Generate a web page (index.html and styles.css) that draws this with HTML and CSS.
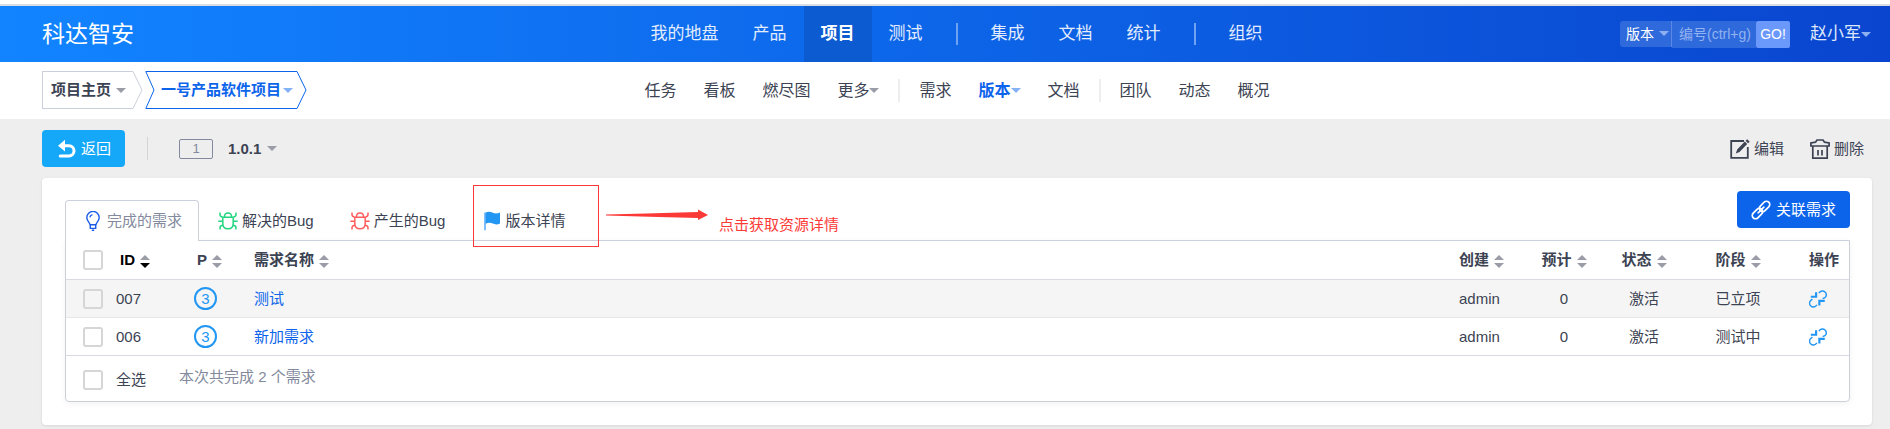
FILE: index.html
```html
<!DOCTYPE html>
<html lang="zh-CN">
<head>
<meta charset="utf-8">
<title>科达智安 - 版本 1.0.1</title>
<link rel="stylesheet" href="styles.css">
</head>
<body>
<svg class="symbols" aria-hidden="true">
  <symbol id="i-bulb" viewBox="0 0 20 20"><path d="M7 13.8C7 11.6 3.8 10.200 3.800 6.600a6.200 6.200 0 0 1 12.400 0C16.200 10.200 13 11.600 13 13.800ZM7.300 14v3.400h5.400V14M8.800 19.200h2.400M6.900 6.400A3.200 3.200 0 0 1 9.400 3.600" fill="none" stroke="currentColor" stroke-width="1.400"/></symbol>
  <symbol id="i-bug" viewBox="0 0 20 20"><path d="M3.800 6.200h12.400M4.800 6.200v6.300c0 3.400 2 5.300 5.200 5.300s5.200-1.900 5.200-5.300V6.200M6.400 6C6.400 3.200 7.600 2 10 2s3.600 1.200 3.600 4M4.800 6.200C2.900 6 2 5 2 3.600V1.500M15.200 6.200C17.100 6 18 5 18 3.600V1.500M4.800 10.300H.3M15.200 10.300h4.500M5 14.200c-1.900.2-3 1.200-3 2.600v1.700M15 14.200c1.900.2 3 1.200 3 2.600v1.700" fill="none" stroke="currentColor" stroke-width="1.500"/></symbol>
  <symbol id="i-flag" viewBox="0 0 20 20"><path d="M4 1.500v17.800" stroke="#7fc0fa" stroke-width="2"/><path d="M4.600 1.800c2.600-1.600 5-1 7.200 0s4.400 1 7.200-.2v11c-2.800 1.200-5 1-7.200 0s-4.600-1.200-7.200.2Z" fill="currentColor"/></symbol>
  <symbol id="i-back" viewBox="0 0 20 20"><path d="M5.500 6.800H12a5 5 0 0 1 0 10.100H3.200" fill="none" stroke="currentColor" stroke-width="3" stroke-linecap="round"/><path d="M8 .8v11.600L1 6.700Z" fill="currentColor"/></symbol>
  <symbol id="i-edit" viewBox="0 0 20 20"><path d="M14 2H1.200v16.800H17.800V8" fill="none" stroke="currentColor" stroke-width="1.800"/><path d="m5.800 14.600 1.400-4.200 7.600-7.800 2.400 2.400-7.700 7.900ZM15.600 1.800 17.200.3l2.500 2.400L18 4.300Z" fill="currentColor"/></symbol>
  <symbol id="i-trash" viewBox="0 0 20 20"><path d="M.9 7V4l4.600-.8L7 1h6l1.500 2.200 4.600.8v3ZM2.800 7v12.200h14.400V7M8 11v5.500M12 11v5.500" fill="none" stroke="currentColor" stroke-width="1.700"/></symbol>
  <symbol id="i-link" viewBox="0 0 20 20"><g fill="none" stroke="currentColor" stroke-width="1.700" stroke-linecap="round" transform="rotate(-45 10 10)"><rect x="-1" y="6.700" width="12" height="6.600" rx="3.300"/><rect x="9" y="6.700" width="12" height="6.600" rx="3.300"/><path d="M6 10h8"/></g></symbol>
  <symbol id="i-unlink" viewBox="0 0 20 20"><path d="M11 3.400C12.800.8 15.800.4 17.800 2.200s1.900 4.800-.2 6.400l-2.400 1M8.800 16.600C7 19.200 4 19.600 2 17.800s-1.900-4.800.2-6.400l1.600-1.200" fill="none" stroke="currentColor" stroke-width="1.600"/><path d="M7.900 2.600v4.900H2M11.500 17.200v-5.100h6" fill="none" stroke="currentColor" stroke-width="2.400"/></symbol>
</svg>

<header class="header">
  <a class="logo" href="#">科达智安</a>
  <nav class="mainnav">
    <a href="#">我的地盘</a>
    <a href="#">产品</a>
    <a href="#" class="active">项目</a>
    <a href="#">测试</a>
    <span class="mainnav-divider"></span>
    <a href="#">集成</a>
    <a href="#">文档</a>
    <a href="#">统计</a>
    <span class="mainnav-divider"></span>
    <a href="#">组织</a>
  </nav>
  <div class="header-tools">
    <form class="search">
      <span class="search-type">
        <select aria-label="搜索类型"><option>版本</option></select>
        <span class="caret caret-light"></span>
      </span>
      <input class="search-input" type="text" placeholder="编号(ctrl+g)" aria-label="编号">
      <button class="search-go" type="button">GO!</button>
    </form>
    <button class="user" type="button">赵小军<span class="caret caret-light"></span></button>
  </div>
</header>

<div class="subheader">
  <div class="crumbs">
    <button class="crumb" type="button">
      <span class="crumb-body crumb-first">项目主页<span class="caret"></span></span>
      <svg class="crumb-end" viewBox="0 0 10 38"><path d="M0 .5 9 19 0 37.500"/></svg>
    </button>
    <button class="crumb crumb-active" type="button">
      <svg class="crumb-end" viewBox="0 0 10 38"><path d="M10 .5H.800L9 19 .800 37.500H10"/></svg>
      <span class="crumb-body">一号产品软件项目<span class="caret"></span></span>
      <svg class="crumb-end" viewBox="0 0 10 38"><path d="M0 .5 9 19 0 37.500"/></svg>
    </button>
  </div>
  <nav class="subnav">
    <a href="#">任务</a>
    <a href="#">看板</a>
    <a href="#">燃尽图</a>
    <a href="#">更多<span class="caret"></span></a>
    <span class="subnav-divider"></span>
    <a href="#">需求</a>
    <a href="#" class="active">版本<span class="caret"></span></a>
    <a href="#">文档</a>
    <span class="subnav-divider"></span>
    <a href="#">团队</a>
    <a href="#">动态</a>
    <a href="#">概况</a>
  </nav>
</div>

<main class="main">
  <div class="toolbar">
    <button class="btn btn-back" type="button"><svg class="icon"><use href="#i-back"/></svg>返回</button>
    <span class="toolbar-divider"></span>
    <span class="label-id">1</span>
    <button class="version" type="button">1.0.1<span class="caret"></span></button>
    <div class="actions">
      <a href="#"><svg class="icon"><use href="#i-edit"/></svg>编辑</a>
      <a href="#"><svg class="icon"><use href="#i-trash"/></svg>删除</a>
    </div>
  </div>

  <section class="panel">
    <div class="tabbar">
      <nav class="tabs">
        <a href="#" class="tab active"><svg class="icon blue"><use href="#i-bulb"/></svg>完成的需求</a>
        <a href="#" class="tab"><svg class="icon green"><use href="#i-bug"/></svg>解决的Bug</a>
        <a href="#" class="tab"><svg class="icon red"><use href="#i-bug"/></svg>产生的Bug</a>
        <a href="#" class="tab"><svg class="icon sky"><use href="#i-flag"/></svg>版本详情</a>
      </nav>
      <button class="btn btn-link" type="button"><svg class="icon"><use href="#i-link"/></svg>关联需求</button>
    </div>

    <div class="tablebox">
      <table class="stories">
        <colgroup>
          <col class="c-check"><col class="c-id"><col class="c-pri"><col>
          <col class="c-user"><col class="c-est"><col class="c-est"><col class="c-stage"><col class="c-act">
        </colgroup>
        <thead>
          <tr>
            <th class="check"><input type="checkbox" aria-label="选择全部需求"></th>
            <th class="id-head sorted">ID<span class="sort"></span></th>
            <th class="pri-head">P<span class="sort"></span></th>
            <th>需求名称<span class="sort"></span></th>
            <th>创建<span class="sort"></span></th>
            <th class="mid">预计<span class="sort"></span></th>
            <th class="mid">状态<span class="sort"></span></th>
            <th class="mid">阶段<span class="sort"></span></th>
            <th class="act">操作</th>
          </tr>
        </thead>
        <tbody>
          <tr>
            <td class="check"><input type="checkbox" aria-label="选择 007"></td>
            <td>007</td>
            <td><span class="pri">3</span></td>
            <td><a href="#">测试</a></td>
            <td>admin</td>
            <td class="mid">0</td>
            <td class="mid">激活</td>
            <td class="mid">已立项</td>
            <td class="act"><button type="button" aria-label="移除需求"><svg class="icon"><use href="#i-unlink"/></svg></button></td>
          </tr>
          <tr>
            <td class="check"><input type="checkbox" aria-label="选择 006"></td>
            <td>006</td>
            <td><span class="pri">3</span></td>
            <td><a href="#">新加需求</a></td>
            <td>admin</td>
            <td class="mid">0</td>
            <td class="mid">激活</td>
            <td class="mid">测试中</td>
            <td class="act"><button type="button" aria-label="移除需求"><svg class="icon"><use href="#i-unlink"/></svg></button></td>
          </tr>
        </tbody>
      </table>
      <div class="tablefoot">
        <label class="check-all"><input type="checkbox">全选</label>
        <span class="summary">本次共完成 2 个需求</span>
      </div>
    </div>

    <div class="note">
      <span class="note-box"></span>
      <svg class="note-arrow" viewBox="0 0 102 12"><path d="M0 5.500 40 4.500 92 3V.5L102 6 92 11V9L52 8 0 6.500Z"/></svg>
      <span class="note-text">点击获取资源详情</span>
    </div>
  </section>
</main>
</body>
</html>
```
FILE: styles.css
```css
* {
  box-sizing: border-box;
}

html {
  background: #eee;
}

body {
  margin: 0;
  border-top: 4px solid #fff;
  background: #eee;
  color: #3c4353;
  font: 15px/20px "Liberation Sans", "Noto Sans CJK SC", sans-serif;
}

a {
  color: inherit;
  text-decoration: none;
}

button,
input,
select {
  margin: 0;
  padding: 0;
  border: 0;
  background: none;
  color: inherit;
  font: inherit;
}

button {
  cursor: pointer;
}

.symbols {
  display: none;
}

.icon {
  flex: none;
  width: 20px;
  height: 20px;
  overflow: visible;
}

.caret {
  display: inline-block;
  flex: none;
  border: 5px solid transparent;
  border-top-color: #9a9ca7;
  border-bottom: 0;
}

.caret-light {
  border-top-color: #8fb0f0;
}

/* Header */
.header {
  display: grid;
  grid-template-columns: 1fr auto 1fr;
  align-items: center;
  height: 58px;
  padding: 0 19px 0 42px;
  border-top: 2px solid #dadde2;
  background: linear-gradient(90deg, #1284ff, #0d65e8 50%, #0a45cf);
  color: #fff;
}

.logo {
  font-size: 23px;
  line-height: 32px;
}

.mainnav {
  display: flex;
  align-items: center;
  font-size: 17px;
  line-height: 56px;
}

.mainnav a {
  padding: 0 17px;
  color: #e3edfd;
}

.mainnav a.active {
  background: #0d5bd0;
  color: #fff;
  font-weight: bold;
}

.mainnav-divider {
  width: 2px;
  height: 22px;
  margin: 0 16px;
  background: #6ea3f3;
}

.header-tools {
  display: flex;
  justify-content: flex-end;
  align-items: center;
  gap: 20px;
}

.search {
  display: flex;
  font-size: 14px;
}

.search-type {
  display: flex;
  align-items: center;
  width: 52px;
  height: 26px;
  padding-left: 6px;
  border-right: 1px solid #5c88e4;
  border-radius: 3px 0 0 3px;
  background: #2f6adc;
}

.search-type select {
  width: 33px;
  appearance: none;
  color: #fff;
}

.search-input {
  width: 84px;
  height: 27px;
  padding: 0 0 0 7px;
  background: #2f6adc;
}

.search-input::placeholder {
  color: #93b2ef;
}

.search-go {
  width: 34px;
  height: 27px;
  border-radius: 2px;
  background: #6b98fb;
  color: #fff;
}

.user {
  display: flex;
  align-items: center;
  color: #dde8fb;
  font-size: 17px;
}

/* Project bar */
.subheader {
  display: grid;
  grid-template-columns: 1fr auto 1fr;
  align-items: center;
  height: 57px;
  padding: 0 18px 0 42px;
  background: #fff;
}

.crumbs {
  display: flex;
  gap: 2px;
  margin-bottom: 1px;
}

.crumb {
  display: flex;
  color: #3c4353;
  font-weight: bold;
}

.crumb-body {
  display: flex;
  align-items: center;
  gap: 5px;
  height: 38px;
  padding: 0 7px 0 8px;
  border: solid #cbcfdb;
  border-width: 1px 0;
}

.crumb-first {
  border-left-width: 1px;
}

.crumb-end {
  width: 10px;
  height: 38px;
  fill: none;
  stroke: #cbcfdb;
}

.crumb-active {
  color: #0c64eb;
}

.crumb-active .crumb-body {
  gap: 2px;
  padding: 0 4px 0 6px;
  border-color: #0c64eb;
}

.crumb-active .crumb-end {
  stroke: #0c64eb;
}

.crumb-active .caret,
.subnav .active .caret {
  border-top-color: #86b2f5;
}

.subnav {
  display: flex;
  align-items: center;
  gap: 1px;
  font-size: 16px;
}

.subnav a {
  display: flex;
  align-items: center;
  padding: 0 13px;
}

.subnav a.active {
  color: #0c64eb;
  font-weight: bold;
}

.subnav-divider {
  width: 2px;
  height: 23px;
  margin: 0 5px;
  background: #eee;
}

/* Toolbar */
.main {
  padding: 11px 18px 4px 42px;
}

.toolbar {
  display: flex;
  align-items: center;
  margin-bottom: 11px;
}

.btn {
  display: flex;
  align-items: center;
  gap: 5px;
  height: 37px;
  padding: 0 14px;
  border-radius: 4px;
  color: #fff;
}

.btn-back {
  gap: 4px;
  padding: 0 14px 0 15px;
  background: #16a8f8;
}

.toolbar-divider {
  width: 1px;
  height: 23px;
  margin: 0 31px 0 22px;
  background: #d4d4d4;
}

.label-id {
  width: 34px;
  border: 1px solid #838a9d;
  border-radius: 2px;
  color: #838a9d;
  font-size: 13px;
  line-height: 18px;
  text-align: center;
}

.version {
  display: flex;
  align-items: center;
  gap: 6px;
  margin-left: 15px;
  font-weight: bold;
}

.actions {
  display: flex;
  gap: 26px;
  margin-left: auto;
  padding-right: 8px;
}

.actions a {
  display: flex;
  align-items: center;
  gap: 4px;
}

/* Panel and tabs */
.panel {
  position: relative;
  padding: 13px 22px 23px 23px;
  border-radius: 4px;
  background: #fff;
  box-shadow: 0 1px 3px rgba(0, 0, 0, 0.1);
}

.tabbar {
  display: flex;
  justify-content: space-between;
}

.tabs {
  display: flex;
  align-items: flex-end;
  gap: 1px;
  margin-bottom: -1px;
}

.tab {
  display: flex;
  align-items: center;
  gap: 4px;
  height: 41px;
  padding: 0 16px 0 17px;
  border: 1px solid transparent;
  border-bottom: 0;
  border-radius: 4px 4px 0 0;
}

.tab.active {
  z-index: 1;
  border-color: #cbd0db;
  background: #fff;
  color: #838a9d;
}

.btn-link {
  margin-bottom: 12px;
  background: #0c64eb;
}

.blue {
  color: #1a5ce8;
}

.green {
  color: #22d67f;
}

.red {
  color: #ff5d5d;
}

.sky {
  color: #2196f3;
}

/* Story table */
.tablebox {
  border: 1px solid #cbd0db;
  border-radius: 0 0 4px 4px;
  box-shadow: 0 2px 6px rgba(0, 0, 0, 0.05);
}

.stories {
  width: 100%;
  border-collapse: separate;
  border-spacing: 0;
  table-layout: fixed;
}

.c-check { width: 42px; }
.c-id { width: 78px; }
.c-pri { width: 60px; }
.c-user { width: 73px; }
.c-est { width: 80px; }
.c-stage { width: 108px; }
.c-act { width: 57px; }

.stories th,
.stories td {
  height: 38px;
  padding: 0 0 0 8px;
  border-bottom: 1px solid #e6e6e6;
  text-align: left;
  white-space: nowrap;
}

.stories th,
.stories tr:last-child td {
  border-bottom-color: #d9dbe0;
}

.stories th {
  height: 39px;
}

.stories tbody tr:first-child {
  background: #f5f5f5;
}

.stories a {
  color: #0c64eb;
}

.stories .check {
  padding-left: 17px;
}

.stories .id-head {
  padding-left: 12px;
}

.stories .pri-head {
  padding-left: 11px;
}

.stories .mid {
  padding: 0;
  text-align: center;
}

.stories .act {
  padding-left: 17px;
}

.act button {
  display: block;
  color: #2196f3;
}

.act .icon {
  display: block;
  width: 18px;
  height: 18px;
}

input[type="checkbox"] {
  display: block;
  width: 20px;
  height: 20px;
  border: 2px solid #d6d6d6;
  border-radius: 3px;
  appearance: none;
}

.sort {
  display: inline-flex;
  flex-direction: column;
  gap: 3px;
  margin-left: 5px;
  vertical-align: middle;
}

.sort::before,
.sort::after {
  content: "";
  border: 5px solid transparent;
}

.sort::before {
  border-top: 0;
  border-bottom-color: #9a9ca7;
}

.sort::after {
  border-bottom: 0;
  border-top-color: #9a9ca7;
}

.sorted {
  color: #000;
}

.sorted .sort::after {
  border-top-color: #000;
}

.pri {
  display: block;
  width: 23px;
  height: 23px;
  border: 2px solid #2196f3;
  border-radius: 50%;
  color: #2196f3;
  line-height: 19px;
  text-align: center;
}

.tablefoot {
  display: flex;
  align-items: center;
  gap: 33px;
  height: 45px;
  padding: 2px 0 0 17px;
}

.check-all {
  display: flex;
  align-items: center;
  gap: 13px;
}

.summary {
  padding-bottom: 5px;
  color: #838a9d;
}

/* Callout laid over the tabs */
.note {
  position: absolute;
  top: 7px;
  left: 431px;
  display: flex;
  align-items: flex-start;
  color: #fb3a37;
}

.note-box {
  width: 126px;
  height: 62px;
  border: 1px solid;
}

.note-arrow {
  width: 102px;
  height: 12px;
  margin: 24px 11px 0 7px;
  fill: currentColor;
}

.note-text {
  margin-top: 30px;
}
```
